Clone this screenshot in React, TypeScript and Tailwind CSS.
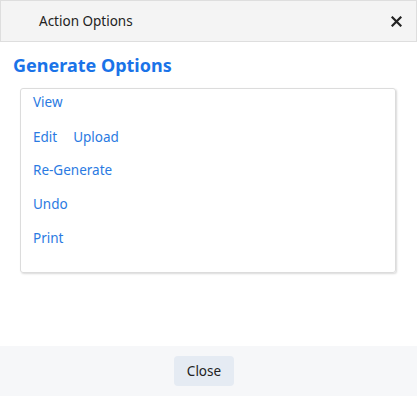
export default function App() {
  const font = { fontFamily: '"Noto Sans", "Open Sans", sans-serif' };
  return (
    <div className="w-[417px] h-[396px] bg-white flex flex-col" style={font}>
      {/* Header */}
      <div className="h-[42px] shrink-0 bg-[#f4f4f4] border border-[#dedede] flex items-center justify-between pl-[38px] pr-[14px]">
        <span className="text-[13.5px] text-[#222]">Action Options</span>
        <button className="text-[#222] mr-[0px]">
          <svg width="11" height="11" viewBox="0 0 11 11" className="block">
            <path d="M1.5 1.5 L9.5 9.5 M9.5 1.5 L1.5 9.5" stroke="#222" strokeWidth="2.2" strokeLinecap="square" />
          </svg>
        </button>
      </div>

      {/* Body */}
      <div className="flex-1 px-[13px] pt-[10px]">
        <h2 className="text-[18px] font-bold text-[#1a73e8] leading-[26px]">Generate Options</h2>
        <div className="mt-[10px] ml-[7px] w-[376px] h-[185px] border border-[#dcdcdc] rounded-[3px] shadow-[1px_1px_2px_rgba(0,0,0,0.15)] pl-[12px] pt-[3px]">
          <ul className="flex flex-col text-[13.5px] text-[#2a7ae2]">
            <li className="h-[34px] leading-[20px]">View</li>
            <li className="h-[34px] leading-[20px] flex gap-[16px] pt-[1px]">
              <span>Edit</span>
              <span>Upload</span>
            </li>
            <li className="h-[34px] leading-[20px]">Re-Generate</li>
            <li className="h-[34px] leading-[20px]">Undo</li>
            <li className="h-[34px] leading-[20px]">Print</li>
          </ul>
        </div>
      </div>

      {/* Footer */}
      <div className="h-[50px] shrink-0 bg-[#f6f7f9] flex items-center justify-center pr-[9px]">
        <button className="w-[60px] h-[30px] rounded-[4px] bg-[#e5ebf3] text-[13.5px] text-[#222]">Close</button>
      </div>
    </div>
  );
}
